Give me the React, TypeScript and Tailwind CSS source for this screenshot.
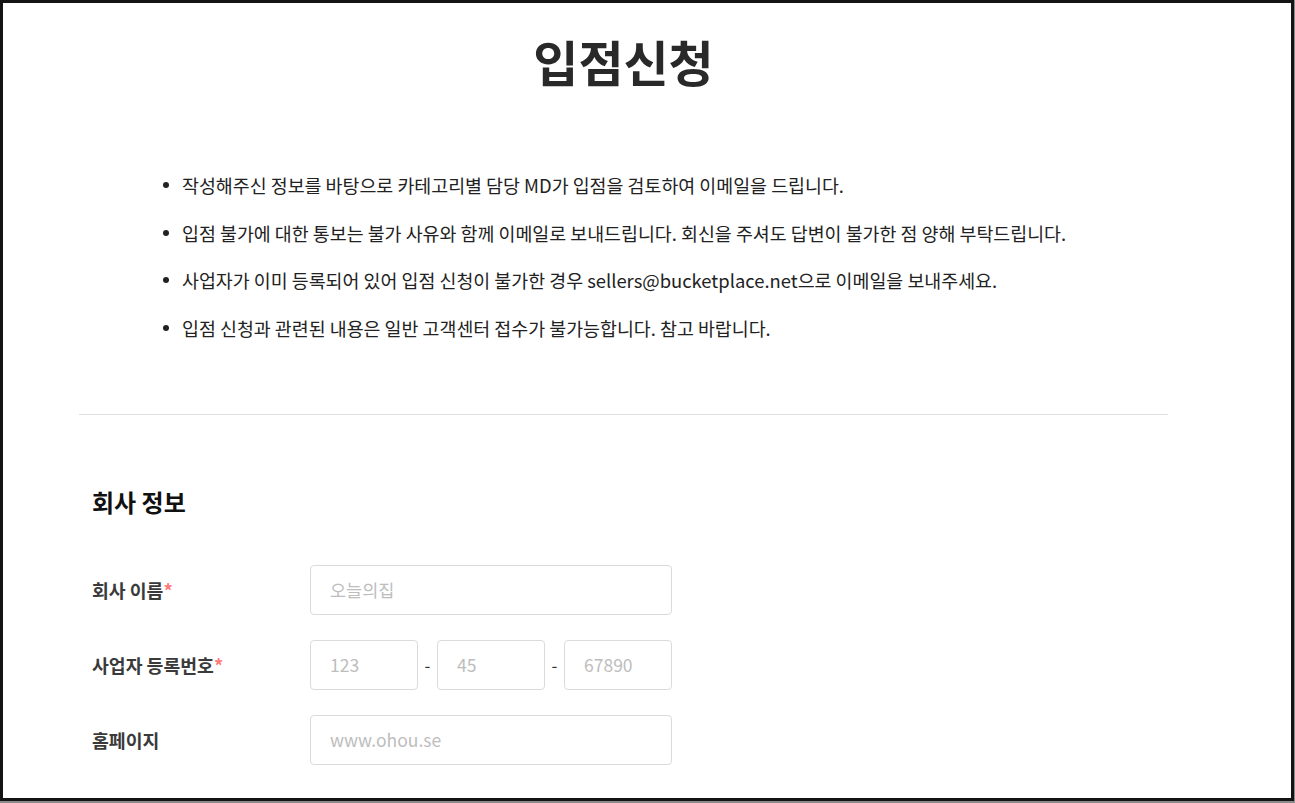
const font = { fontFamily: '"Noto Sans CJK KR", "Noto Sans", sans-serif' };

const notices = [
  '작성해주신 정보를 바탕으로 카테고리별 담당 MD가 입점을 검토하여 이메일을 드립니다.',
  '입점 불가에 대한 통보는 불가 사유와 함께 이메일로 보내드립니다. 회신을 주셔도 답변이 불가한 점 양해 부탁드립니다.',
  '사업자가 이미 등록되어 있어 입점 신청이 불가한 경우 sellers@bucketplace.net으로 이메일을 보내주세요.',
  '입점 신청과 관련된 내용은 일반 고객센터 접수가 불가능합니다. 참고 바랍니다.',
];

function Field({ label, required, children }: { label: string; required?: boolean; children: React.ReactNode }) {
  return (
    <div className="flex items-center">
      <div className="w-[218px] shrink-0 text-[18.3px] font-bold text-[#3a3a3a] leading-[24px]">
        {label}
        {required && <span className="text-[#ff7777]">*</span>}
      </div>
      {children}
    </div>
  );
}

function TextInput({ placeholder, className }: { placeholder: string; className?: string }) {
  return (
    <input
      type="text"
      placeholder={placeholder}
      style={font}
      className={`h-[50px] rounded-[4px] border border-[#dbdbdb] bg-white pl-[19px] text-[17.5px] text-[#292929] placeholder:text-[#bdbdbd] outline-none ${className ?? ''}`}
    />
  );
}

export default function App() {
  return (
    <div className="w-[1295px] h-[803px] bg-[#8a8a8a] overflow-hidden" style={font}>
      <div className="w-[1294px] h-[801px] border-[3px] border-[#141414] bg-white overflow-hidden">
        <div className="ml-[76px] w-[1089px]">
          {/* Title */}
          <h1 className="mt-[33px] text-center text-[49px] leading-[49px] font-bold text-[#292929]">
            입점신청
          </h1>

          {/* Notices */}
          <ul className="mt-[86px] pl-[84px] flex flex-col gap-[19.67px]">
            {notices.map((n) => (
              <li key={n} className="flex items-center text-[18.4px] leading-[28px] text-[#222]">
                <span className="w-[6px] h-[6px] rounded-full bg-[#222] shrink-0 mr-[13px]" />
                <span>{n}</span>
              </li>
            ))}
          </ul>

          <div className="mt-[72px] h-px bg-[#e0e0e0]" />

          {/* Company info */}
          <div className="pl-[13px]">
            <h2 className="mt-[71px] text-[24px] leading-[32px] font-bold text-[#111]">회사 정보</h2>

            <div className="mt-[47px] flex flex-col gap-[25px]">
              <Field label="회사 이름" required>
                <TextInput placeholder="오늘의집" className="w-[362px]" />
              </Field>
              <Field label="사업자 등록번호" required>
                <div className="flex items-center">
                  <TextInput placeholder="123" className="w-[108px]" />
                  <span className="w-[19px] text-center text-[17px] text-[#333]">-</span>
                  <TextInput placeholder="45" className="w-[108px]" />
                  <span className="w-[19px] text-center text-[17px] text-[#333]">-</span>
                  <TextInput placeholder="67890" className="w-[108px]" />
                </div>
              </Field>
              <Field label="홈페이지">
                <TextInput placeholder="www.ohou.se" className="w-[362px]" />
              </Field>
            </div>
          </div>
        </div>
      </div>
    </div>
  );
}
